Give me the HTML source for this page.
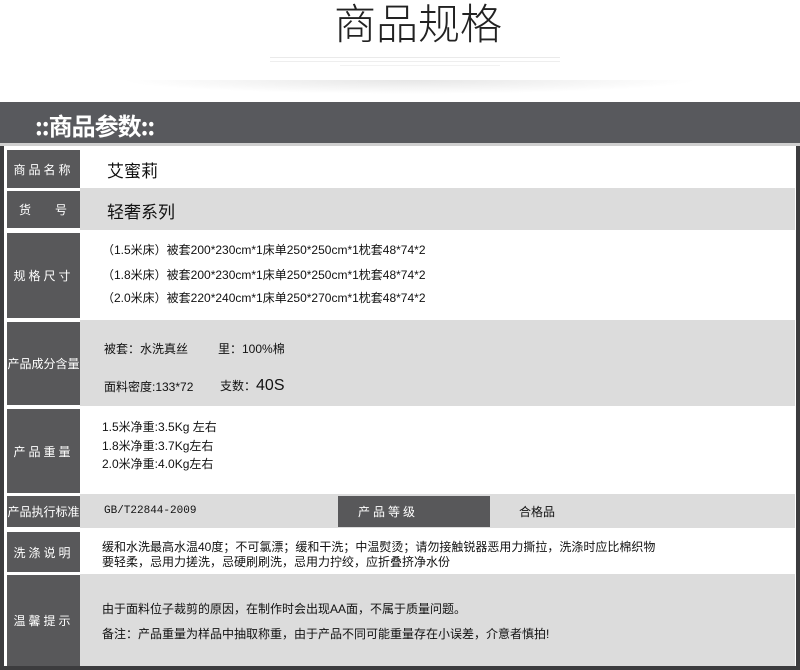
<!DOCTYPE html>
<html><head><meta charset="utf-8"><style>
*{margin:0;padding:0;box-sizing:border-box}
body{width:800px;height:670px;background:#fff;position:relative;overflow:hidden;font-family:"Liberation Sans","Noto Sans CJK SC",sans-serif;color:#111}
.a{position:absolute}
.lab{position:absolute;left:7px;width:73px;background:#58585a;color:#fff;font-size:12px;display:flex;align-items:center;justify-content:center;letter-spacing:3px;white-space:nowrap}
.row{position:absolute;left:80px;right:5px}
.g{background:#dcdcdc}
.t{position:absolute;font-size:12px;white-space:nowrap;font-family:"Liberation Sans","Noto Sans CJK SC",sans-serif}
</style></head><body>
<div class="a" style="left:0;top:0;width:800px;text-align:center;padding-left:36px;font-size:42px;font-weight:300;line-height:46px;top:-1px;font-family:'Noto Sans CJK SC',sans-serif;color:#222">商品规格</div>
<div class="a" style="left:270px;top:57px;width:290px;height:1px;background:#eaeaea"></div>
<div class="a" style="left:270px;top:61px;width:290px;height:1px;background:#eeeeee"></div>
<div class="a" style="left:340px;top:65px;width:160px;height:1px;background:#f2f2f2"></div>
<div class="a" style="left:120px;top:80px;width:580px;height:14px;background:radial-gradient(ellipse at 50% 0%,#e6e6e6,#fff 70%)"></div>

<div class="a" style="left:0;top:102px;width:800px;height:41px;background:#58595d"></div>
<div class="a" style="left:35px;top:107px;color:#fff;font-size:24px;font-weight:bold;letter-spacing:-1px;font-family:'Noto Sans CJK SC',sans-serif">::商品参数::</div>
<div class="a" style="left:0;top:143px;width:800px;height:3px;background:#cfcfcf"></div>
<div class="a" style="left:0;top:146px;width:4px;height:524px;background:#3c3c3e"></div>
<div class="a" style="left:796px;top:146px;width:4px;height:524px;background:#3c3c3e"></div>
<div class="a" style="left:0;top:666px;width:800px;height:4px;background:#3c3c3e"></div>

<div class="row g" style="top:188px;height:42px"></div>
<div class="row g" style="top:320px;height:86px"></div>
<div class="row g" style="top:494px;height:34px"></div>
<div class="row g" style="top:574px;height:92px"></div>

<div class="lab" style="top:150px;height:38px">商品名称</div>
<div class="t" style="left:107px;top:157px;font-size:17px">艾蜜莉</div>
<div class="lab" style="top:191px;height:37px;justify-content:space-between;padding:0 10px 0 12px">货<span>号</span></div>
<div class="t" style="left:107px;top:198px;font-size:17px">轻奢系列</div>

<div class="lab" style="top:233px;height:85px">规格尺寸</div>
<div class="t" style="left:102px;top:241px">（1.5米床）被套200*230cm*1床单250*250cm*1枕套48*74*2</div>
<div class="t" style="left:102px;top:266px">（1.8米床）被套200*230cm*1床单250*250cm*1枕套48*74*2</div>
<div class="t" style="left:102px;top:289px">（2.0米床）被套220*240cm*1床单250*270cm*1枕套48*74*2</div>

<div class="lab" style="top:322px;height:83px;letter-spacing:0;font-size:12px">产品成分含量</div>
<div class="t" style="left:104px;top:340px">被套：水洗真丝</div>
<div class="t" style="left:218px;top:340px">里：100%棉</div>
<div class="t" style="left:104px;top:378px">面料密度:133*72</div>
<div class="t" style="left:220px;top:377px">支数：<span style="font-size:16px">40S</span></div>

<div class="lab" style="top:409px;height:84px">产品重量</div>
<div class="t" style="left:102px;top:418px">1.5米净重:3.5Kg 左右</div>
<div class="t" style="left:102px;top:437px">1.8米净重:3.7Kg左右</div>
<div class="t" style="left:102px;top:455px">2.0米净重:4.0Kg左右</div>

<div class="lab" style="top:496px;height:31px;letter-spacing:0;width:73px">产品执行标准</div>
<div class="t" style="left:104px;top:505px;font-family:'Liberation Mono',monospace;font-size:11px">GB/T22844-2009</div>
<div class="lab" style="left:338px;width:152px;top:496px;height:31px;justify-content:flex-start;padding-left:20px">产品等级</div>
<div class="t" style="left:519px;top:503px">合格品</div>

<div class="lab" style="top:532px;height:40px">洗涤说明</div>
<div class="t" style="left:102px;top:538px">缓和水洗最高水温40度；不可氯漂；缓和干洗；中温熨烫；请勿接触锐器恶用力撕拉，洗涤时应比棉织物</div>
<div class="t" style="left:102px;top:553px">要轻柔，忌用力搓洗，忌硬刷刷洗，忌用力拧绞，应折叠挤净水份</div>

<div class="lab" style="top:575px;height:91px">温馨提示</div>
<div class="t" style="left:102px;top:600px">由于面料位子裁剪的原因，在制作时会出现AA面，不属于质量问题。</div>
<div class="t" style="left:102px;top:625px">备注：产品重量为样品中抽取称重，由于产品不同可能重量存在小误差，介意者慎拍!</div>
</body></html>
